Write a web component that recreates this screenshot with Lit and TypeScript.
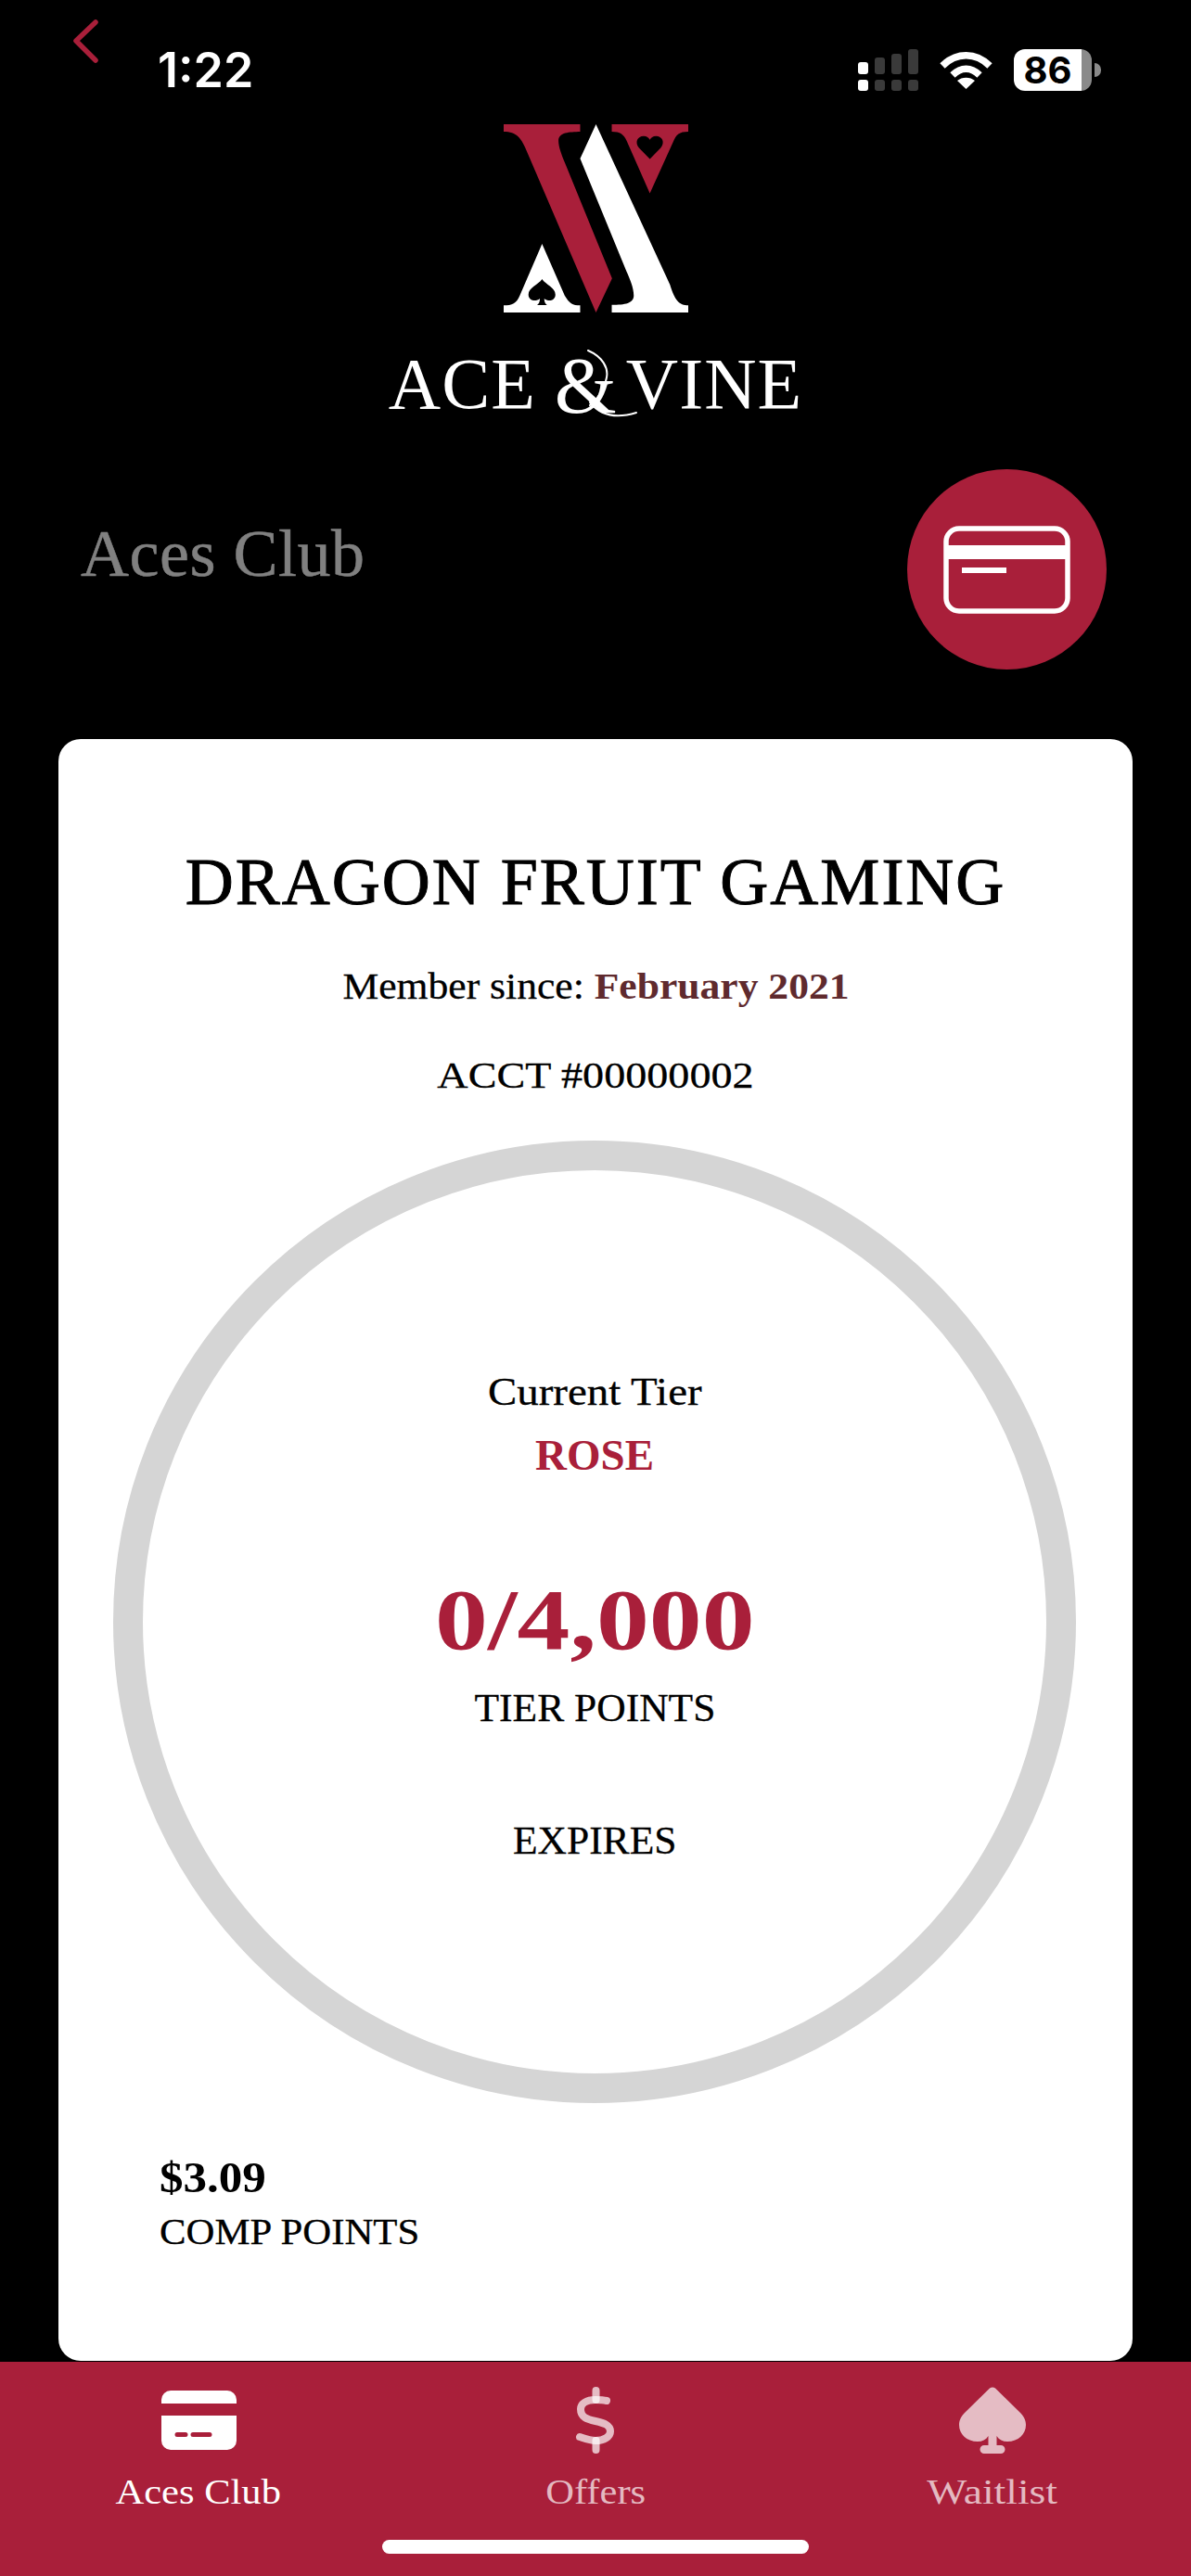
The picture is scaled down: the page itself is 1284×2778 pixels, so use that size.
import { LitElement, html, css, svg } from 'lit';
import { customElement } from 'lit/decorators.js';

const SERIF = css`"Liberation Serif", "Times New Roman", serif`;
const RED = css`#a91f3a`;

// logo drawn in a 3x coordinate space taken from the mark itself
const logo = svg`
  <path fill="#a91f3a" d="M128 72H375V96C340 97 305 98 305 125C305 145 315 170 325 195L478 570L426 680L205 165C185 115 170 96 128 96Z"/>
  <path fill="#fff" d="M426 72L665 590C680 640 695 657 724 657V680H477V655C520 655 548 650 548 625C548 600 535 570 525 548L375 183Z"/>
  <path fill="#a91f3a" fill-rule="evenodd" d="M477 72H724V96C695 96 685 105 675 130L600 295L525 125C515 105 505 96 477 96ZM600 184L565 148C550 130 560 110 580 110C590 110 597 115 600 122C603 115 610 110 620 110C640 110 650 130 635 148Z"/>
  <path fill="#fff" fill-rule="evenodd" d="M252 458L325 625C340 650 350 657 375 657V680H128V657C155 657 170 650 180 625ZM252 572C240 590 208 600 208 622C208 640 230 648 245 635C245 645 242 652 236 656H268C262 652 259 645 259 635C274 648 295 640 295 622C295 600 264 590 252 572Z"/>
`;

@customElement('app-root')
export class AppRoot extends LitElement {
  static styles = css`
    :host {
      display: flex;
      flex-direction: column;
      width: 1284px;
      height: 2778px;
      background: #000;
      font-family: ${SERIF};
      color: #000;
      overflow: hidden;
    }
    svg { display: block; flex: none; }

    .status {
      height: 134px;
      flex: none;
      display: flex;
      align-items: flex-start;
      padding: 0 97px 0 78px;
    }
    .back { margin-top: 19px; }
    .time {
      margin: 46px 0 0 62px;
      font: 600 52px/60px Inter, "Liberation Sans", sans-serif;
      color: #fff;
    }
    .status-icons {
      margin: 53px 0 0 auto;
      display: flex;
      align-items: center;
      gap: 23px;
    }
    .battery { display: flex; align-items: center; gap: 3px; }
    .battery-body {
      width: 84px;
      height: 45px;
      border-radius: 12px;
      background: linear-gradient(to right, #fff 73px, #8a8a8a 73px);
      padding-right: 11px;
      box-sizing: border-box;
      text-align: center;
      font: 700 40px/45px Inter, "Liberation Sans", sans-serif;
      color: #000;
    }
    .battery-nub { width: 7px; height: 15px; background: #8a8a8a; border-radius: 0 8px 8px 0; }

    .brand { display: flex; flex-direction: column; align-items: center; flex: none; }
    .wordmark {
      margin-top: 31px;
      height: 92px;
      display: flex;
      align-items: baseline;
      font-size: 78px;
      line-height: 92px;
      letter-spacing: 1px;
      color: #fff;
      white-space: nowrap;
    }
    .amp {
      position: relative;
      width: 97px;
      padding-left: 20px;
      box-sizing: border-box;
      font-size: 86px;
      line-height: 0;
      letter-spacing: 0;
    }
    .amp-inner { display: inline-block; transform: translateY(5px); }
    .swash { position: absolute; left: 22px; top: -34px; }

    .heading {
      flex: none;
      margin-top: 46px;
      display: flex;
      justify-content: space-between;
      align-items: flex-start;
      padding: 0 91px 0 87px;
    }
    .heading h1 {
      margin: 51px 0 0;
      font-size: 72px;
      line-height: 80px;
      font-weight: 400;
      letter-spacing: 0.5px;
      color: #808080;
      -webkit-text-stroke: 0.5px #808080;
    }
    .heading-btn {
      width: 215px;
      height: 216px;
      border-radius: 50%;
      background: ${RED};
      display: flex;
      align-items: center;
      justify-content: center;
    }

    .card {
      flex: 1;
      min-height: 0;
      margin: 75px 63px 1px 63px;
      background: #fff;
      border-radius: 24px;
      padding-top: 118px;
      display: flex;
      flex-direction: column;
      align-items: center;
      -webkit-text-stroke: 0.3px currentColor;
    }
    .name {
      font-size: 72px;
      line-height: 72px;
      letter-spacing: 2px;
      white-space: nowrap;
      -webkit-text-stroke: 1px #000;
    }
    .since { margin-top: 53px; font-size: 40px; line-height: 48px; white-space: nowrap; transform: scaleX(1.09); }
    .since b { color: #5f2a2e; font-weight: 700; -webkit-text-stroke: 0; }
    .acct { margin-top: 48px; font-size: 40px; line-height: 48px; transform: scaleX(1.153); }

    .ring {
      margin: 46px 2px 0 0;
      width: 1038px;
      height: 1038px;
      box-sizing: border-box;
      border: 32px solid #d5d5d5;
      border-radius: 50%;
      padding-top: 214px;
      display: flex;
      flex-direction: column;
      align-items: center;
      flex: none;
    }
    .tier-label { font-size: 42px; line-height: 50px; transform: scaleX(1.117); }
    .tier { margin-top: 16px; font-size: 47px; line-height: 54px; font-weight: 700; color: ${RED}; -webkit-text-stroke: 0; }
    .points { margin-top: 98px; font-size: 94px; line-height: 104px; font-weight: 700; color: ${RED}; transform: scaleX(1.21); -webkit-text-stroke: 0; }
    .points-label { margin-top: 19px; font-size: 42px; line-height: 50px; transform: scaleX(1.036); }
    .expires { margin-top: 93px; font-size: 42px; line-height: 50px; transform: scaleX(1.036); }

    .comp { align-self: flex-start; margin: 55px 0 0 109px; }
    .comp-value { font-size: 46px; line-height: 52px; font-weight: 700; transform: scaleX(1.11); transform-origin: left; -webkit-text-stroke: 0; }
    .comp-label { margin-top: 8px; font-size: 40px; line-height: 48px; transform: scaleX(1.07); transform-origin: left; }

    .tabs {
      flex: none;
      height: 231px;
      box-sizing: border-box;
      background: ${RED};
      padding-top: 27px;
      display: flex;
      flex-direction: column;
    }
    .tab-row { display: grid; grid-template-columns: repeat(3, 1fr); }
    .tab {
      display: flex;
      flex-direction: column;
      align-items: center;
      color: rgba(255, 255, 255, 0.7);
      font-size: 38px;
      line-height: 46px;
    }
    .tab.active { color: #fff; }
    .tab-icon { height: 72px; display: flex; align-items: center; margin-bottom: 18px; }
    .tab-label { transform: scaleX(1.12); }
    .tab-label.wider { transform: scaleX(1.2); }
    .home-bar {
      align-self: center;
      margin-top: 29px;
      width: 460px;
      height: 15px;
      border-radius: 8px;
      background: #fff;
    }
  `;

  render() {
    return html`
      <div class="status">
        <svg class="back" width="30" height="52" viewBox="0 0 30 52">
          <path d="M25 5L4 25L25 46" fill="none" stroke="#a91f3a" stroke-width="5.500" stroke-linecap="round" stroke-linejoin="round"/>
        </svg>
        <div class="time">1:22</div>
        <div class="status-icons">
          <svg width="65" height="45" viewBox="0 0 65 45">
            <rect x="0" y="14" width="11" height="13" rx="3" fill="#fff"/>
            <rect x="18" y="9" width="11" height="18" rx="3" fill="#3a3a3a"/>
            <rect x="36" y="5" width="11" height="22" rx="3" fill="#3a3a3a"/>
            <rect x="54" y="0" width="11" height="27" rx="3" fill="#3a3a3a"/>
            <rect x="0" y="33" width="11" height="12" rx="3" fill="#fff"/>
            <rect x="18" y="33" width="11" height="12" rx="3" fill="#3a3a3a"/>
            <rect x="36" y="33" width="11" height="12" rx="3" fill="#3a3a3a"/>
            <rect x="54" y="33" width="11" height="12" rx="3" fill="#3a3a3a"/>
          </svg>
          <svg width="57" height="42" viewBox="0 0 57 42">
            <path d="M3 16C18 1 39 1 54 16" fill="none" stroke="#fff" stroke-width="7.500"/>
            <path d="M14 26C23 17 34 17 43 26" fill="none" stroke="#fff" stroke-width="7.500"/>
            <path d="M28.500 41L19 32C24 27.500 33 27.500 38 32Z" fill="#fff"/>
          </svg>
          <div class="battery">
            <div class="battery-body">86</div>
            <div class="battery-nub"></div>
          </div>
        </div>
      </div>

      <div class="brand">
        <svg width="199" height="203" viewBox="128 72 596 608">${logo}</svg>
        <div class="wordmark">
          <span>ACE</span>
          <span class="amp">
            <span class="amp-inner">&amp;</span>
            <svg class="swash" width="90" height="80" viewBox="0 0 90 80" fill="none" stroke="#fff" stroke-width="2" stroke-linecap="round">
              <path d="M34 1C50 8 56 20 54 30C52 45 42 55 36 60"/>
              <path d="M36 57C45 68 60 76 86 68"/>
            </svg>
          </span>
          <span>VINE</span>
        </div>
      </div>

      <div class="heading">
        <h1>Aces Club</h1>
        <div class="heading-btn">
          <svg width="137" height="95" viewBox="0 0 137 95">
            <rect x="3" y="3" width="131" height="89" rx="14" fill="none" stroke="#fff" stroke-width="5.500"/>
            <rect x="3" y="21" width="131" height="15" fill="#fff"/>
            <rect x="20" y="45" width="48" height="6" fill="#fff"/>
          </svg>
        </div>
      </div>

      <div class="card">
        <div class="name">DRAGON FRUIT GAMING</div>
        <div class="since">Member since: <b>February 2021</b></div>
        <div class="acct">ACCT #00000002</div>
        <div class="ring">
          <div class="tier-label">Current Tier</div>
          <div class="tier">ROSE</div>
          <div class="points">0/4,000</div>
          <div class="points-label">TIER POINTS</div>
          <div class="expires">EXPIRES</div>
        </div>
        <div class="comp">
          <div class="comp-value">$3.09</div>
          <div class="comp-label">COMP POINTS</div>
        </div>
      </div>

      <div class="tabs">
        <div class="tab-row">
          <div class="tab active">
            <div class="tab-icon">
              <svg width="81" height="64" viewBox="0 0 81 64">
                <path fill="#fff" d="M10 0H71A10 10 0 0 1 81 10V14H0V10A10 10 0 0 1 10 0Z"/>
                <path fill="#fff" fill-rule="evenodd" d="M0 27H81V54A10 10 0 0 1 71 64H10A10 10 0 0 1 0 54ZM17 45a2.500 2.500 0 0 0 0 5h9a2.500 2.500 0 0 0 0-5ZM34 45a2.500 2.500 0 0 0 0 5h18a2.500 2.500 0 0 0 0-5Z"/>
              </svg>
            </div>
            <span class="tab-label">Aces Club</span>
          </div>
          <div class="tab">
            <div class="tab-icon">
              <svg width="44" height="72" viewBox="0 0 44 72" fill="none" stroke="currentColor" stroke-width="8" stroke-linecap="round">
                <path d="M34 15C30 14 27 14 22 14C12 14 6 18 6 24C6 33 13 35 22 37C31 39 38 41 38 48C38 54 31 58 22 58C16 58 11 56 5 54"/>
                <path d="M22.500 4V14M22.500 58V68"/>
              </svg>
            </div>
            <span class="tab-label">Offers</span>
          </div>
          <div class="tab">
            <div class="tab-icon">
              <svg width="72" height="72" viewBox="0 0 72 72" fill="currentColor">
                <path d="M33 1.500Q36 -0.500 39 1.500L65 27C70 32 72 36 72 41C72 51 64 59 52 59C47 59 43 57 40.500 53V63H45A4.500 4.500 0 0 1 45 72H27A4.500 4.500 0 0 1 27 63H31.500V53C29 57 25 59 20 59C8 59 0 51 0 41C0 36 2 32 7 27Z"/>
              </svg>
            </div>
            <span class="tab-label wider">Waitlist</span>
          </div>
        </div>
        <div class="home-bar"></div>
      </div>
    `;
  }
}
